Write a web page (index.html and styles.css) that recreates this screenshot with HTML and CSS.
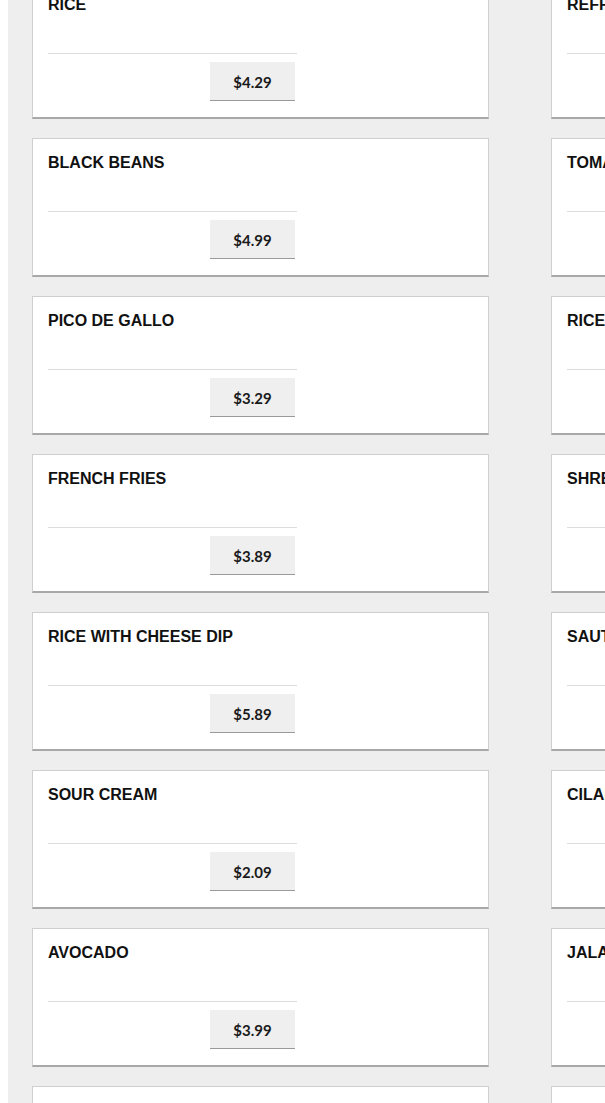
FILE: index.html
```html
<!DOCTYPE html>
<html lang="en">
  <head>
    <meta charset="UTF-8" />
    <meta name="viewport" content="width=device-width, initial-scale=1.0" />
    <title>Sides</title>
    <link rel="stylesheet" href="styles.css">
  </head>
  <body>
    <div class="page">
      <div class="menu">
        <!-- fila 1 -->
        <div class="item">
          <div class="item-name">RICE</div>
          <div class="item-foot"><span class="price">$4.29</span></div>
        </div>
        <div class="item">
          <div class="item-name">REFRIED BEANS</div>
          <div class="item-foot"><span class="price">$4.29</span></div>
        </div>

        <div class="item">
          <div class="item-name">BLACK BEANS</div>
          <div class="item-foot"><span class="price">$4.99</span></div>
        </div>
        <div class="item">
          <div class="item-name">TOMATOES</div>
          <div class="item-foot"><span class="price">$2.09</span></div>
        </div>

        <div class="item">
          <div class="item-name">PICO DE GALLO</div>
          <div class="item-foot"><span class="price">$3.29</span></div>
        </div>
        <div class="item">
          <div class="item-name">RICE AND BEANS</div>
          <div class="item-foot"><span class="price">$5.29</span></div>
        </div>

        <div class="item">
          <div class="item-name">FRENCH FRIES</div>
          <div class="item-foot"><span class="price">$3.89</span></div>
        </div>
        <div class="item">
          <div class="item-name">SHREDDED CHEESE</div>
          <div class="item-foot"><span class="price">$2.49</span></div>
        </div>

        <div class="item">
          <div class="item-name">RICE WITH CHEESE DIP</div>
          <div class="item-foot"><span class="price">$5.89</span></div>
        </div>
        <div class="item">
          <div class="item-name">SAUTEED ONIONS</div>
          <div class="item-foot"><span class="price">$2.49</span></div>
        </div>

        <div class="item">
          <div class="item-name">SOUR CREAM</div>
          <div class="item-foot"><span class="price">$2.09</span></div>
        </div>
        <div class="item">
          <div class="item-name">CILANTRO</div>
          <div class="item-foot"><span class="price">$1.09</span></div>
        </div>

        <div class="item">
          <div class="item-name">AVOCADO</div>
          <div class="item-foot"><span class="price">$3.99</span></div>
        </div>
        <div class="item">
          <div class="item-name">JALAPEÑOS</div>
          <div class="item-foot"><span class="price">$1.49</span></div>
        </div>

        <div class="item">
          <div class="item-name">GUACAMOLE</div>
          <div class="item-foot"><span class="price">$4.49</span></div>
        </div>
        <div class="item">
          <div class="item-name">TORTILLAS</div>
          <div class="item-foot"><span class="price">$1.99</span></div>
        </div>
      </div>
    </div>
  </body>
</html>
```

FILE: styles.css
```css
html,
body {
  margin: 0;
  padding: 0;
  overflow: hidden;
  height: 100%;
}

body {
  font-family: "Liberation Sans", Arial, sans-serif;
  background-color: #fff;
  padding-left: 8px;
}

.page {
  background-color: #eeeeee;
  height: 100%;
  overflow: hidden;
  padding-left: 24px;
  width: 1200px;
}

.menu {
  display: grid;
  grid-template-columns: 457px 457px;
  column-gap: 62px;
  row-gap: 19px;
  margin-top: -20px;
}

.item {
  background-color: #fff;
  border: 1px solid #cfcfcf;
  border-bottom: 2px solid #a8a8a8;
  padding: 15px 15px 16px;
}

.item-name {
  height: 57px;
  font-size: 16px;
  font-weight: bold;
  color: #111;
}

.item-foot {
  width: 249px;
  border-top: 1px solid #dddddd;
  padding-top: 8px;
}

.price {
  display: block;
  width: 85px;
  height: 38px;
  margin-left: 162px;
  background-color: #efefef;
  border-bottom: 1px solid #9a9a9a;
  font-family: Lato, "Liberation Sans", sans-serif;
  font-weight: bold;
  font-size: 15px;
  line-height: 40px;
  text-align: center;
  color: #1a1a1a;
}
```
